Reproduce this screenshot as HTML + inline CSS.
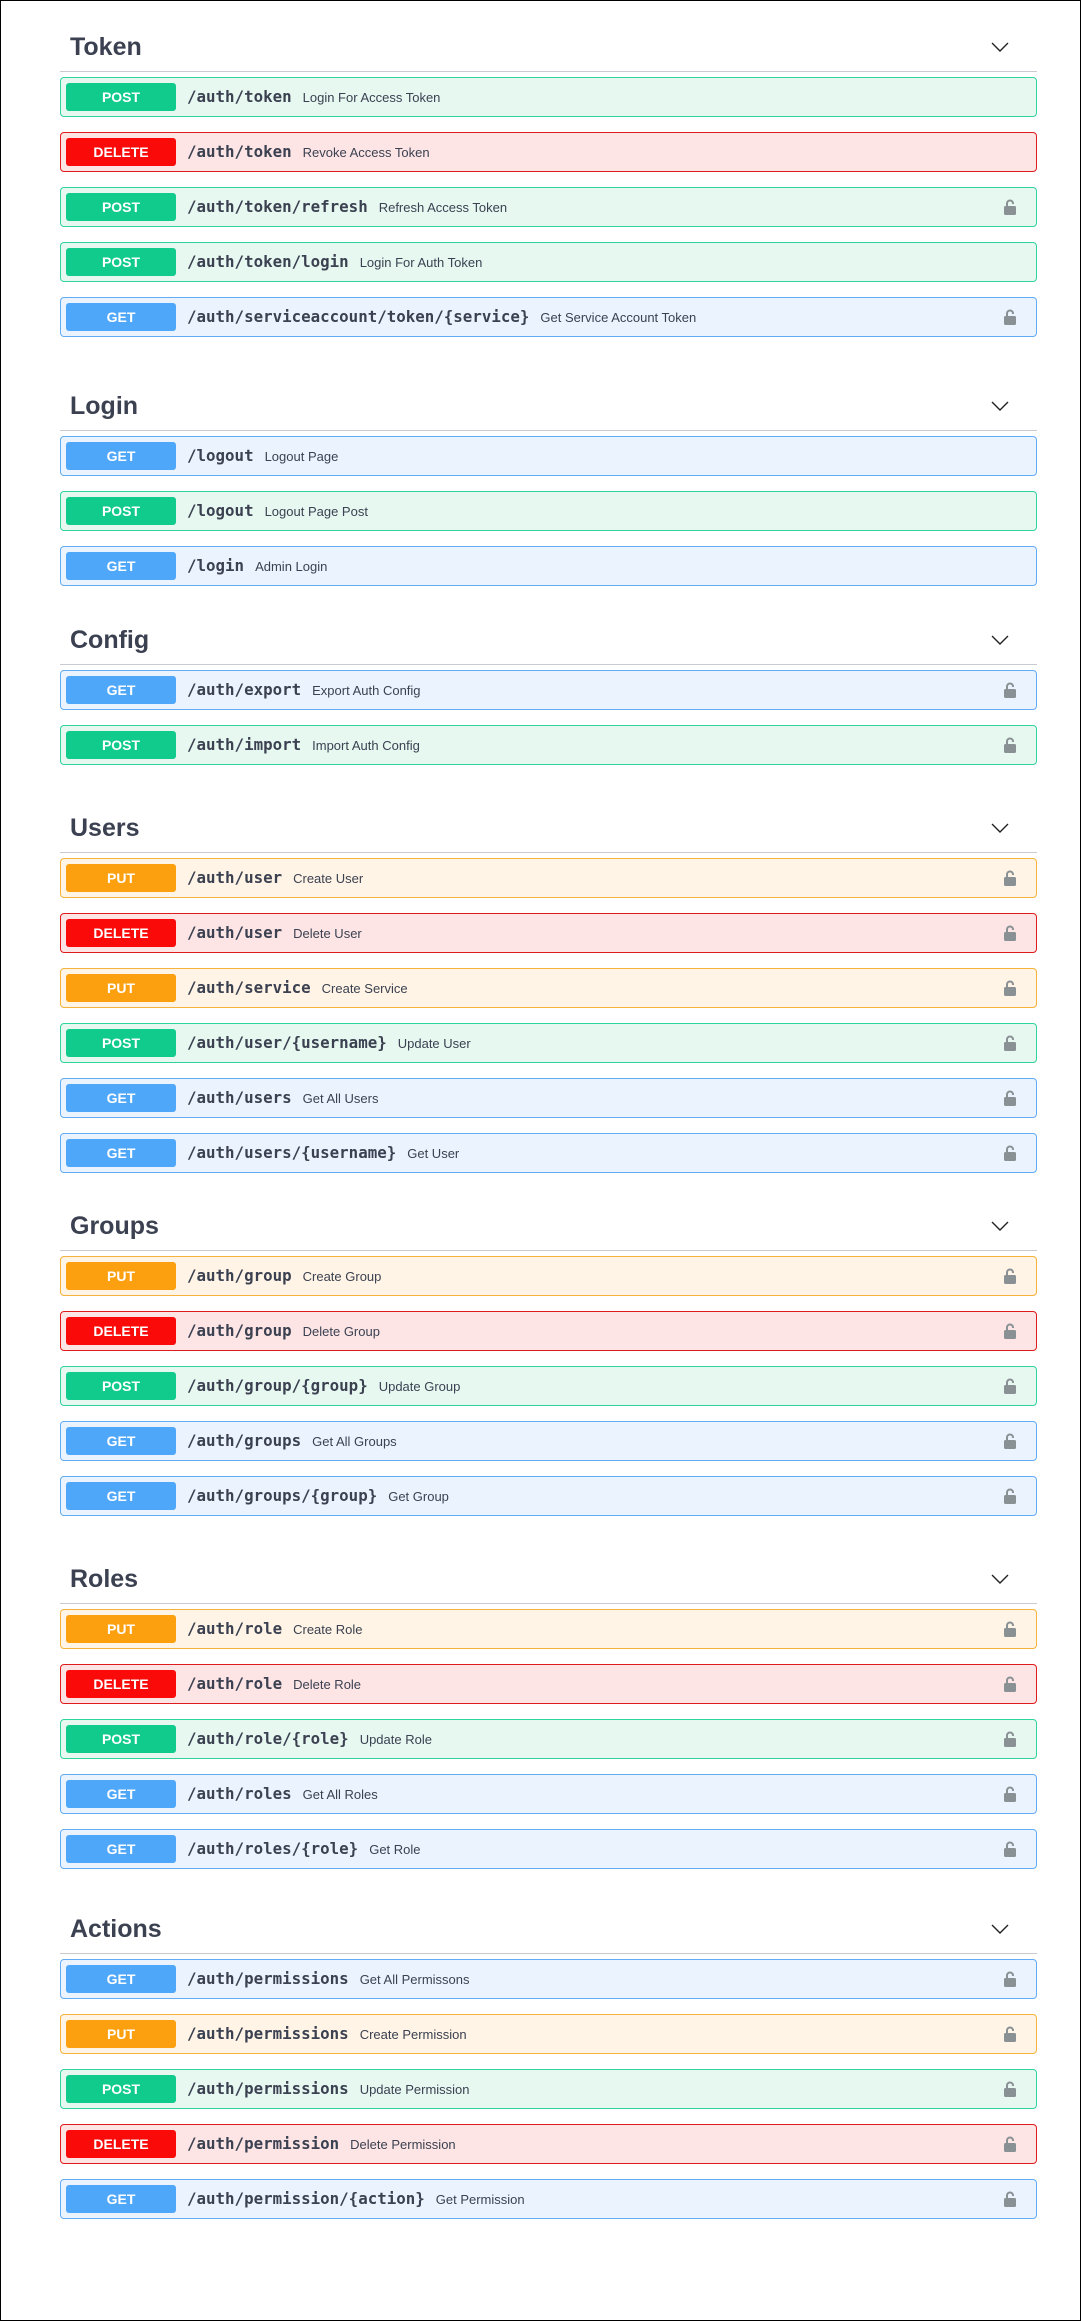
<!DOCTYPE html>
<html><head><meta charset="utf-8"><style>
html,body{margin:0;padding:0;background:#fff;}
body{width:1081px;height:2321px;position:relative;overflow:hidden;font-family:"Liberation Sans",sans-serif;}
.frame{position:absolute;left:0;top:0;width:1079px;height:2319px;border:1px solid #000;}
.t{position:absolute;left:70px;font-size:25px;font-weight:bold;color:#3b4151;line-height:30px;}
.ln{position:absolute;left:60px;width:977px;height:1px;background:#c9cbd0;}
.ch{position:absolute;left:991px;width:18px;height:12px;}
.r{position:absolute;left:60px;width:975px;height:38px;border:1px solid;border-radius:4px;}
.b{position:absolute;left:5px;top:5px;width:110px;height:28px;border-radius:3px;color:#fff;font-weight:bold;font-size:14px;line-height:28px;text-align:center;}
.p{position:absolute;left:126px;top:0;line-height:38px;white-space:nowrap;}
.p b{font-family:"DejaVu Sans Mono","Liberation Mono",monospace;font-size:15.8px;color:#3b4151;}
.p span{font-family:"Liberation Sans",sans-serif;font-size:13px;color:#3b4151;margin-left:11px;}
.lk{position:absolute;left:942px;top:11px;width:14px;height:16px;}
.POST{background:#e7f8f1;border-color:#2fd39c;}.POST .b{background:#10cb8c;}
.DELETE{background:#fde5e6;border-color:#e01b1b;}.DELETE .b{background:#fb0a0a;}
.GET{background:#ebf4fe;border-color:#62acf5;}.GET .b{background:#4fa7f9;}
.PUT{background:#fff4e5;border-color:#f6b23a;}.PUT .b{background:#fca010;}
</style></head><body><div class="frame"></div>
<div id="c"></div>
<script>
var L='<svg class="lk" viewBox="0 0 14 16"><path d="M4 7V4.5a3 3 0 0 1 6 0V5" fill="none" stroke="#8a9194" stroke-width="2"/><rect x="1" y="7" width="12" height="9" rx="1.5" fill="#8a9194"/></svg>';
var S=[
["Token",77,[["POST","/auth/token","Login For Access Token",0],["DELETE","/auth/token","Revoke Access Token",0],["POST","/auth/token/refresh","Refresh Access Token",1],["POST","/auth/token/login","Login For Auth Token",0],["GET","/auth/serviceaccount/token/{service}","Get Service Account Token",1]]],
["Login",436,[["GET","/logout","Logout Page",0],["POST","/logout","Logout Page Post",0],["GET","/login","Admin Login",0]]],
["Config",670,[["GET","/auth/export","Export Auth Config",1],["POST","/auth/import","Import Auth Config",1]]],
["Users",858,[["PUT","/auth/user","Create User",1],["DELETE","/auth/user","Delete User",1],["PUT","/auth/service","Create Service",1],["POST","/auth/user/{username}","Update User",1],["GET","/auth/users","Get All Users",1],["GET","/auth/users/{username}","Get User",1]]],
["Groups",1256,[["PUT","/auth/group","Create Group",1],["DELETE","/auth/group","Delete Group",1],["POST","/auth/group/{group}","Update Group",1],["GET","/auth/groups","Get All Groups",1],["GET","/auth/groups/{group}","Get Group",1]]],
["Roles",1609,[["PUT","/auth/role","Create Role",1],["DELETE","/auth/role","Delete Role",1],["POST","/auth/role/{role}","Update Role",1],["GET","/auth/roles","Get All Roles",1],["GET","/auth/roles/{role}","Get Role",1]]],
["Actions",1959,[["GET","/auth/permissions","Get All Permissons",1],["PUT","/auth/permissions","Create Permission",1],["POST","/auth/permissions","Update Permission",1],["DELETE","/auth/permission","Delete Permission",1],["GET","/auth/permission/{action}","Get Permission",1]]]];
var h='';
S.forEach(function(s){var top=s[1],ln=top-6,tc=ln-24;
h+='<div class="t" style="top:'+(tc-15)+'px">'+s[0]+'</div>';
h+='<div class="ln" style="top:'+ln+'px"></div>';
h+='<svg class="ch" style="top:'+(tc-6)+'px" viewBox="0 0 18 12"><path d="M1 2l8 8 8-8" fill="none" stroke="#222" stroke-width="1.4"/></svg>';
s[2].forEach(function(r,i){h+='<div class="r '+r[0]+'" style="top:'+(top+i*55)+'px"><div class="b">'+r[0]+'</div><div class="p"><b>'+r[1]+'</b><span>'+r[2]+'</span></div>'+(r[3]?L:'')+'</div>';});});
document.getElementById('c').innerHTML=h;
</script>
</body></html>
